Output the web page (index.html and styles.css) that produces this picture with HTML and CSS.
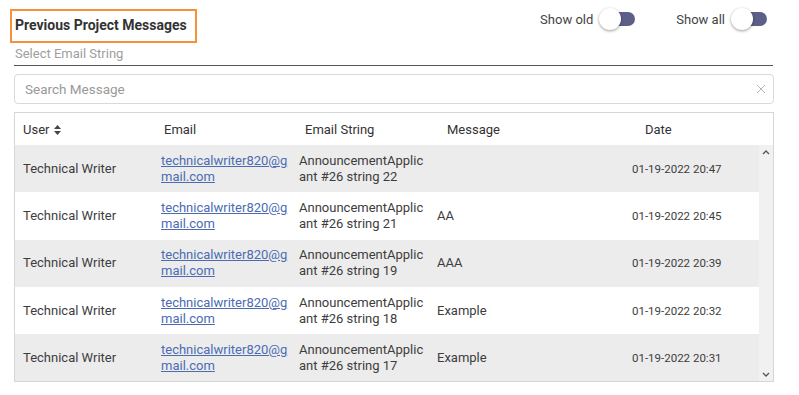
FILE: index.html
```html
<!DOCTYPE html>
<html lang="en">
<head>
  <meta charset="UTF-8" />
  <title>Previous Project Messages</title>
  <link rel="stylesheet" href="styles.css">
</head>
<body>
  <div class="container">
    <div class="top-bar">
      <h2 class="title">Previous Project Messages</h2>
      <div class="toggles">
        <label class="toggle">
          <span>Show old</span>
          <span class="switch"><span class="knob"></span></span>
        </label>
        <label class="toggle">
          <span>Show all</span>
          <span class="switch"><span class="knob"></span></span>
        </label>
      </div>
    </div>

    <div class="select-field">Select Email String</div>

    <div class="search-box">
      <span class="placeholder">Search Message</span>
      <svg class="clear-icon" width="10" height="10" viewBox="0 0 10 10">
        <path d="M1 1L9 9M9 1L1 9" stroke="#b5b5b5" stroke-width="1" fill="none"/>
      </svg>
    </div>

    <div class="table">
      <div class="table-head">
        <div class="th">User
          <svg class="sort-icon" width="7" height="10" viewBox="0 0 7 10">
            <path d="M3.5 0L7 4H0Z M3.5 10L7 6H0Z" fill="#444"/>
          </svg>
        </div>
        <div class="th">Email</div>
        <div class="th">Email String</div>
        <div class="th">Message</div>
        <div class="th">Date</div>
      </div>

      <div class="table-body">
        <div class="rows">
          <div class="row">
            <div class="td">Technical Writer</div>
            <div class="td"><a href="#" class="email">technicalwriter820@gmail.com</a></div>
            <div class="td wrap">AnnouncementApplicant #26 string 22</div>
            <div class="td"></div>
            <div class="td date">01-19-2022 20:47</div>
          </div>
          <div class="row">
            <div class="td">Technical Writer</div>
            <div class="td"><a href="#" class="email">technicalwriter820@gmail.com</a></div>
            <div class="td wrap">AnnouncementApplicant #26 string 21</div>
            <div class="td">AA</div>
            <div class="td date">01-19-2022 20:45</div>
          </div>
          <div class="row">
            <div class="td">Technical Writer</div>
            <div class="td"><a href="#" class="email">technicalwriter820@gmail.com</a></div>
            <div class="td wrap">AnnouncementApplicant #26 string 19</div>
            <div class="td">AAA</div>
            <div class="td date">01-19-2022 20:39</div>
          </div>
          <div class="row">
            <div class="td">Technical Writer</div>
            <div class="td"><a href="#" class="email">technicalwriter820@gmail.com</a></div>
            <div class="td wrap">AnnouncementApplicant #26 string 18</div>
            <div class="td">Example</div>
            <div class="td date">01-19-2022 20:32</div>
          </div>
          <div class="row">
            <div class="td">Technical Writer</div>
            <div class="td"><a href="#" class="email">technicalwriter820@gmail.com</a></div>
            <div class="td wrap">AnnouncementApplicant #26 string 17</div>
            <div class="td">Example</div>
            <div class="td date">01-19-2022 20:31</div>
          </div>
        </div>

        <!-- fake scrollbar -->
        <div class="scrollbar">
          <svg width="8" height="5" viewBox="0 0 8 5"><path d="M1 4L4 1L7 4" stroke="#555" stroke-width="1.3" fill="none"/></svg>
          <svg width="8" height="5" viewBox="0 0 8 5"><path d="M1 1L4 4L7 1" stroke="#555" stroke-width="1.3" fill="none"/></svg>
        </div>
      </div>
    </div>
  </div>
</body>
</html>
```

FILE: styles.css
```css
* {
  margin: 0;
  padding: 0;
  box-sizing: border-box;
}

body {
  font-family: 'Roboto', 'Liberation Sans', sans-serif;
  font-size: 13px;
  color: #3d3d3d;
  background: #fff;
}

.container {
  width: 760px;
  margin-left: 14px;
  padding-top: 9px;
}

.top-bar {
  display: flex;
  justify-content: space-between;
  align-items: flex-start;
}

.title {
  margin-left: -4px;
  width: 187px;
  height: 34px;
  border: 2px solid #f4913b;
  padding-left: 3px;
  font-size: 14px;
  font-weight: 700;
  line-height: 28px;
  color: #333;
}

.toggles {
  display: flex;
  gap: 41px;
  margin-right: 7px;
}

.toggle {
  display: flex;
  align-items: center;
  gap: 7px;
  color: #444;
  height: 20px;
}

.switch {
  position: relative;
  width: 35px;
  height: 14px;
  border-radius: 7px;
  background: #5c6088;
}

.knob {
  position: absolute;
  left: -1px;
  top: -4px;
  width: 22px;
  height: 22px;
  border-radius: 50%;
  background: #fff;
  box-shadow: 0 1px 3px rgba(0, 0, 0, 0.4);
}

.select-field {
  margin-top: 1px;
  height: 22px;
  border-bottom: 1px solid #555;
  color: #9e9e9e;
  padding-left: 1px;
  line-height: 20px;
  width: 759px;
}

.search-box {
  margin-top: 8px;
  height: 30px;
  border: 1px solid #d9d9d9;
  border-radius: 4px;
  display: flex;
  align-items: center;
  justify-content: space-between;
  padding: 0 7px 0 10px;
  color: #999;
  font-size: 13.5px;
}

.table {
  margin-top: 8px;
  border: 1px solid #d6d6d6;
}

.table-head {
  display: grid;
  grid-template-columns: 141px 141px 142px 198px 1fr;
  height: 32px;
  align-items: center;
}

.th {
  padding-left: 8px;
  color: #333;
  display: flex;
  align-items: center;
  gap: 5px;
}

.sort-icon {
  margin-top: 1px;
}

.table-body {
  display: flex;
}

.rows {
  flex: 1;
}

.row {
  display: grid;
  grid-template-columns: 138px 138px 138px 195px 1fr;
  height: 47.3px;
  align-items: center;
  line-height: 16px;
}

.row:nth-child(odd) {
  background: #ececec;
}

.td {
  padding-left: 8px;
}

.email {
  color: #4b6cb3;
  word-break: break-all;
}

.wrap {
  word-break: break-all;
}

.date {
  font-size: 11.5px;
}

.scrollbar {
  width: 14px;
  background: #f1f1f1;
  display: flex;
  flex-direction: column;
  justify-content: space-between;
  align-items: center;
  padding: 5px 0 4px;
}
```
